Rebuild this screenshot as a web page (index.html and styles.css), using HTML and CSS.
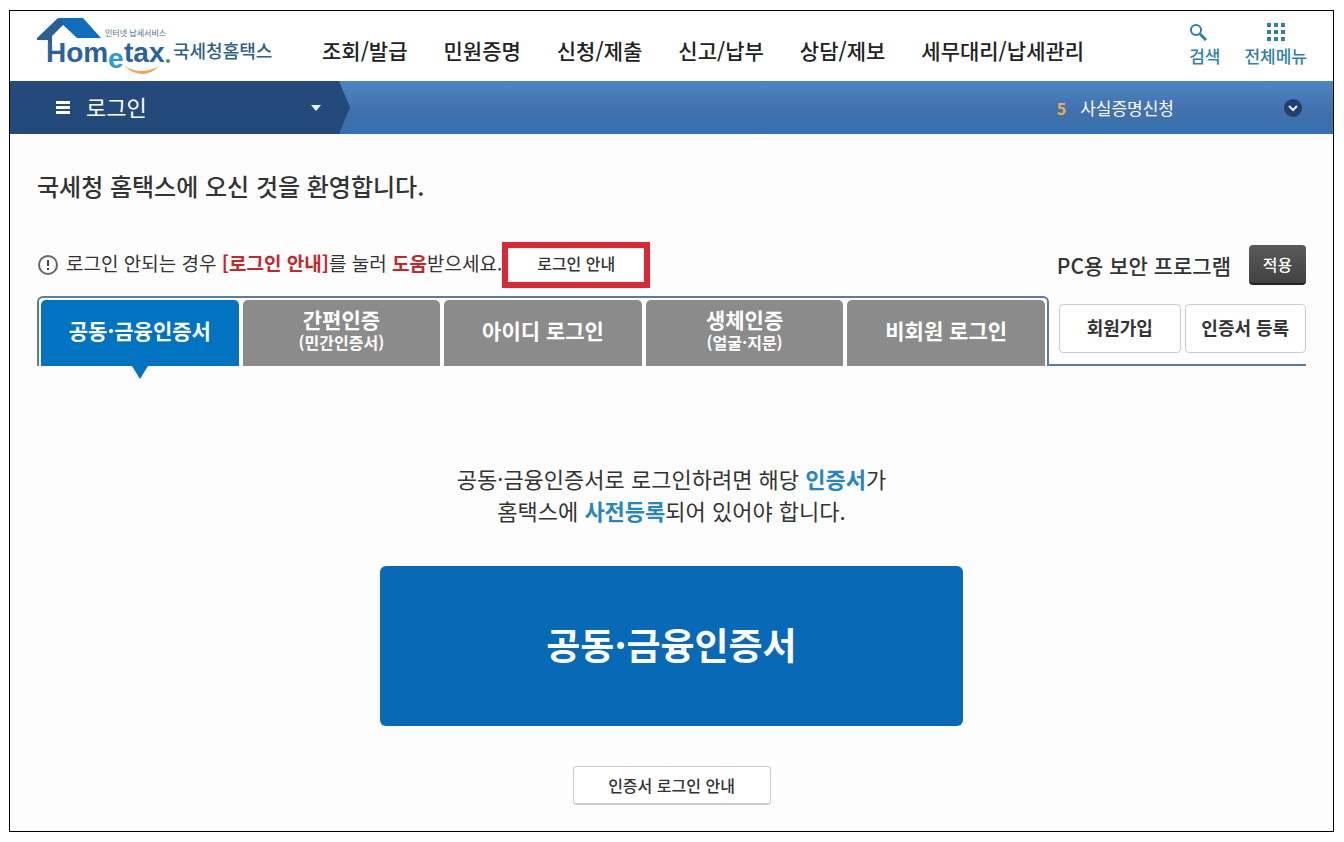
FILE: index.html
```html
<!DOCTYPE html>
<html lang="ko">
<head>
    <meta charset="UTF-8">
    <meta name="viewport" content="width=device-width, initial-scale=1">
    <title>국세청 홈택스 로그인</title>
    <link rel="stylesheet" href="styles.css">
</head>
<body>
    <div class="page">
        <header class="header">
            <a class="logo" href="#">
                <svg width="240" height="64" viewBox="0 0 240 64">
                    <!-- 지붕 -->
                    <path fill="#0f6fbd" d="M22 3H47L65 23H41L25 8Z"/>
                    <path fill="#2a5f94" d="M22 3L1 23V25H12V28H16V21L27 10L28 8Z"/>
                    <text class="logo-tagline" x="69" y="21">인터넷 납세서비스</text>
                    <text class="logo-name" x="10" y="47">Hom</text>
                    <text class="logo-e" x="72" y="53">e</text>
                    <text class="logo-name" x="88" y="47">tax</text>
                    <circle cx="132" cy="46" r="2" fill="#3f9a4c"/>
                    <path fill="#f0a54a" d="M88 51Q106 61 123 51Q107 67 88 51Z"/>
                    <text class="logo-korean" x="137" y="43">국세청홈택스</text>
                </svg>
            </a>
            <nav class="menu">
                <a href="#">조회/발급</a>
                <a href="#">민원증명</a>
                <a href="#">신청/제출</a>
                <a href="#">신고/납부</a>
                <a href="#">상담/제보</a>
                <a href="#">세무대리/납세관리</a>
            </nav>
            <div class="tools">
                <button type="button">
                    <svg width="18" height="18" viewBox="0 0 18 18" fill="none" stroke="#2f7fae">
                        <circle cx="7" cy="7" r="5" stroke-width="2"/>
                        <path d="M11 11L17 17" stroke-width="3"/>
                    </svg>
                    검색
                </button>
                <button type="button">
                    <svg width="18" height="18" viewBox="0 0 18 18" fill="#2f7fae">
                        <path d="M0 0h4v4H0zM7 0h4v4H7zM14 0h4v4h-4zM0 7h4v4H0zM7 7h4v4H7zM14 7h4v4h-4zM0 14h4v4H0zM7 14h4v4H7zM14 14h4v4h-4z"/>
                    </svg>
                    전체메뉴
                </button>
            </div>
        </header>

        <div class="bar">
            <button class="bar-title" type="button">
                <svg width="14" height="14" viewBox="0 0 14 14" fill="#fff">
                    <path d="M0 0h14v3H0zM0 5h14v3H0zM0 10h14v3H0z"/>
                </svg>
                <span>로그인</span>
                <svg class="caret" width="10" height="6" viewBox="0 0 10 6" fill="#e4f4ff">
                    <path d="M0 0h10L5 6z"/>
                </svg>
            </button>
            <div class="ranking">
                <b>5</b>
                <a href="#">사실증명신청</a>
                <button type="button" aria-label="펼치기">
                    <svg width="18" height="18" viewBox="0 0 18 18" fill="none">
                        <circle cx="9" cy="9" r="9" fill="#223f6d"/>
                        <path d="M5 7L9 11L13 7" stroke="#e6eef8" stroke-width="2"/>
                    </svg>
                </button>
            </div>
        </div>

        <main class="content">
            <h1>국세청 홈택스에 오신 것을 환영합니다.</h1>

            <div class="notice">
                <svg width="22" height="22" viewBox="0 0 22 22" fill="none">
                    <circle cx="11" cy="11" r="9" stroke="#666" stroke-width="2"/>
                    <path d="M11 6V12M11 14V16" stroke="#444" stroke-width="2"/>
                </svg>
                <p>로그인 안되는 경우 <strong>[로그인 안내]</strong>를 눌러 <strong>도움</strong>받으세요.</p>
                <button class="guide-button" type="button">로그인 안내</button>
                <div class="security">
                    <span>PC용 보안 프로그램</span>
                    <button class="apply-button" type="button">적용</button>
                </div>
            </div>

            <div class="login-types">
                <div class="tabs">
                    <button class="tab active" type="button">공동·금융인증서</button>
                    <button class="tab" type="button">간편인증<small>(민간인증서)</small></button>
                    <button class="tab" type="button">아이디 로그인</button>
                    <button class="tab" type="button">생체인증<small>(얼굴·지문)</small></button>
                    <button class="tab" type="button">비회원 로그인</button>
                </div>
                <div class="side">
                    <button class="white-button" type="button">회원가입</button>
                    <button class="white-button" type="button">인증서 등록</button>
                </div>
            </div>

            <section class="login">
                <p>공동·금융인증서로 로그인하려면 해당 <strong>인증서</strong>가<br>
                홈택스에 <strong>사전등록</strong>되어 있어야 합니다.</p>
                <button class="login-button" type="button">공동·금융인증서</button>
                <button class="white-button login-guide" type="button">인증서 로그인 안내</button>
            </section>
        </main>
    </div>
</body>
</html>
```
FILE: styles.css
```css
* {
    box-sizing: border-box;
}

body {
    margin: 0;
    padding: 10px 10px 10px 9px;
    font-family: "Noto Sans CJK KR", sans-serif;
    color: #333;
    background-color: #fff;
}

h1, p {
    margin: 0;
}

a {
    color: inherit;
    text-decoration: none;
}

button {
    padding: 0;
    border: none;
    background: none;
    color: inherit;
    font-family: inherit;
    cursor: pointer;
}

svg {
    display: block;
    flex: none;
}

.page {
    border: 1px solid #000;
    background-color: #fdfdfd;
}

/* 상단 메뉴 */
.header {
    display: flex;
    height: 70px;
    padding: 0 26px;
    background-color: #fff;
}

.logo {
    padding-top: 4px;
}

.logo-name {
    font: bold 28px "Liberation Sans", sans-serif;
    fill: #2a639c;
}

.logo-e {
    font: bold 28px "Liberation Sans", sans-serif;
    fill: #2b9bd0;
}

.logo-tagline {
    font-size: 8px;
    fill: #4f6f8c;
}

.logo-korean {
    font-size: 18px;
    font-weight: 500;
    fill: #2d5f87;
}

.menu {
    display: flex;
    align-items: center;
    gap: 36px;
    margin-left: 46px;
    padding-top: 8px;
    font-size: 21px;
    font-weight: 500;
    color: #222;
    white-space: nowrap;
}

.tools {
    display: flex;
    align-items: flex-start;
    gap: 24px;
    margin-left: auto;
    padding-top: 12px;
}

.tools button {
    display: flex;
    flex-direction: column;
    align-items: center;
    gap: 4px;
    font-size: 17px;
    font-weight: 500;
    line-height: 22px;
    color: #2f7fae;
    white-space: nowrap;
}

.tools button:first-child {
    align-items: flex-start;
}

/* 현재 메뉴 */
.bar {
    display: flex;
    justify-content: space-between;
    height: 53px;
    background: linear-gradient(#4a88c2, #4575b5 40%, #4170ab 65%, #3272b2);
    color: #fff;
}

.bar-title {
    display: flex;
    align-items: center;
    gap: 16px;
    width: 340px;
    padding: 0 29px 0 46px;
    background-color: #234a7a;
    clip-path: polygon(0 0, 329px 0, 100% 50%, 329px 100%, 0 100%);
    font-size: 22px;
}

.bar-title span {
    padding-bottom: 4px;
}

.caret {
    margin-left: auto;
}

.ranking {
    display: flex;
    align-items: center;
    padding-right: 31px;
    font-size: 17px;
}

.ranking b {
    margin-right: 14px;
    font-size: 16px;
    color: #eab04e;
}

.ranking button {
    margin-left: 110px;
}

/* 본문 */
.content {
    padding: 34px 27px 26px;
}

h1 {
    font-size: 24px;
    font-weight: 500;
    line-height: 36px;
}

.notice {
    display: flex;
    align-items: center;
    margin-top: 38px;
    font-size: 19px;
    white-space: nowrap;
}

.notice p {
    margin-left: 7px;
    padding-bottom: 6px;
}

.notice strong {
    color: #c4262e;
}

.guide-button {
    width: 148px;
    height: 46px;
    padding-bottom: 4px;
    border: 6px solid #dc2832;
    background-color: #fff;
    font-size: 16px;
    font-weight: 500;
}

.security {
    display: flex;
    align-items: center;
    gap: 18px;
    margin-left: auto;
    font-size: 21px;
    font-weight: 500;
}

.apply-button {
    width: 57px;
    height: 40px;
    border-radius: 4px;
    border-bottom: 2px solid #222;
    background: linear-gradient(#5a5a5a, #424242);
    color: #fff;
    font-size: 16px;
    font-weight: 500;
}

.login-types {
    display: flex;
    height: 70px;
    margin-top: 8px;
}

.tabs {
    display: flex;
    flex: 1;
    gap: 4px;
    padding: 2px 2px 0;
    border: 2px solid #5a7d9f;
    border-bottom: none;
    border-radius: 6px 6px 0 0;
}

.tab {
    position: relative;
    flex: 1;
    padding-bottom: 6px;
    border-radius: 5px 5px 0 0;
    background-color: #8b8b8b;
    color: #fff;
    font-size: 21px;
    font-weight: bold;
    line-height: 24px;
    white-space: nowrap;
}

.tab small {
    display: block;
    font-size: 16px;
    line-height: 22px;
}

.tab.active {
    background-color: #0073c1;
}

.tab.active::after {
    content: "";
    position: absolute;
    top: 100%;
    left: 50%;
    margin-left: -8px;
    border: 8px solid transparent;
    border-top: 13px solid #0073c1;
    border-bottom: none;
}

.side {
    display: flex;
    gap: 4px;
    width: 257px;
    padding: 8px 0 11px 10px;
    border-bottom: 2px solid #5a7d9f;
}

.white-button {
    flex: 1;
    padding-bottom: 4px;
    border: 1px solid #ccc;
    border-radius: 4px;
    background-color: #fff;
    font-size: 18px;
    font-weight: bold;
    white-space: nowrap;
}

.login {
    display: flex;
    flex-direction: column;
    align-items: center;
    padding-top: 96px;
    text-align: center;
}

.login p {
    font-size: 22px;
    line-height: 32px;
}

.login strong {
    color: #2786bd;
}

.login-button {
    width: 46%;
    height: 160px;
    margin-top: 40px;
    padding-bottom: 4px;
    border-radius: 6px;
    background-color: #0869b6;
    color: #fff;
    font-size: 37px;
    font-weight: bold;
}

.login-guide {
    flex: none;
    width: 198px;
    height: 39px;
    margin-top: 40px;
    padding-bottom: 0;
    border-bottom: 2px solid #ccc;
    font-size: 16px;
    font-weight: 500;
}
```
